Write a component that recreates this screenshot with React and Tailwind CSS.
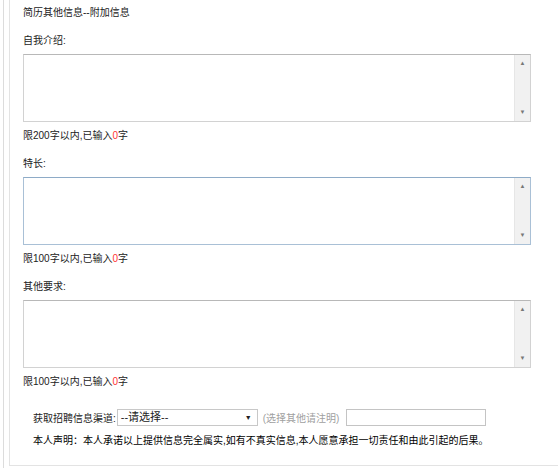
import React from "react";

const font = { fontFamily: '"Liberation Sans", "Noto Sans CJK SC", sans-serif' };

const Counter = ({ limit }) => (
  <div className="h-[16px] text-[10px] leading-[16px] text-[#222]">
    限{limit}字以内,已输入<span className="text-[#ff3333]">0</span>字
  </div>
);

const Area = ({ focused }) => (
  <div
    className={`flex h-[68px] w-[508px] border bg-white ${
      focused
        ? "border-[#a9c0d6] border-t-[#8eabc7]"
        : "border-[#d2d2d2] border-t-[#b8b8b8]"
    }`}
  >
    <div className="flex-1" />
    <div className="flex w-[16px] flex-col items-center justify-between border-l border-[#e6e6e6] bg-[#f1f1f1] pt-[5px] pb-[6px] text-[6px] leading-none text-[#777]">
      <span>▲</span>
      <span>▼</span>
    </div>
  </div>
);

const Section = ({ label, limit, focused }) => (
  <div className="flex flex-col">
    <div className="h-[16px] text-[10px] leading-[16px] text-[#222]">{label}</div>
    <div className="mt-[5px]">
      <Area focused={focused} />
    </div>
    <div className="mt-[6px]">
      <Counter limit={limit} />
    </div>
  </div>
);

export default function App() {
  return (
    <div className="h-[468px] w-[558px] bg-white pl-[3px]" style={font}>
      <div className="h-full border-l border-[#dcdcdc] pl-[5px]">
        <div className="h-[466px] border-l border-b border-[#e3e3e3] pl-[13px] pt-[5px]">
          <div className="h-[16px] text-[10px] leading-[16px] text-[#222]">
            简历其他信息--附加信息
          </div>
          <div className="mt-[12px]">
            <Section label="自我介绍:" limit={200} />
          </div>
          <div className="mt-[12px]">
            <Section label="特长:" limit={100} focused />
          </div>
          <div className="mt-[12px]">
            <Section label="其他要求:" limit={100} />
          </div>
          <div className="mt-[19px] flex items-end pl-[10px] text-[10px] leading-[14px] text-[#222]">
            <span>获取招聘信息渠道:</span>
            <div className="ml-[1px] flex h-[17px] w-[141px] items-center justify-between border border-[#c8c8c8] bg-white pl-[3px] pr-[5px]">
              <span className="text-[11px] leading-none">--请选择--</span>
              <span className="text-[7px] leading-none">▼</span>
            </div>
            <span className="ml-[5px] text-[#a0a0a0]">(选择其他请注明)</span>
            <div className="ml-[7px] h-[17px] w-[140px] border border-[#c4c4c4] bg-white" />
          </div>
          <div className="mt-[7px] pl-[10px] text-[10px] leading-[16px] text-black">
            本人声明：本人承诺以上提供信息完全属实,如有不真实信息,本人愿意承担一切责任和由此引起的后果。
          </div>
        </div>
      </div>
    </div>
  );
}
